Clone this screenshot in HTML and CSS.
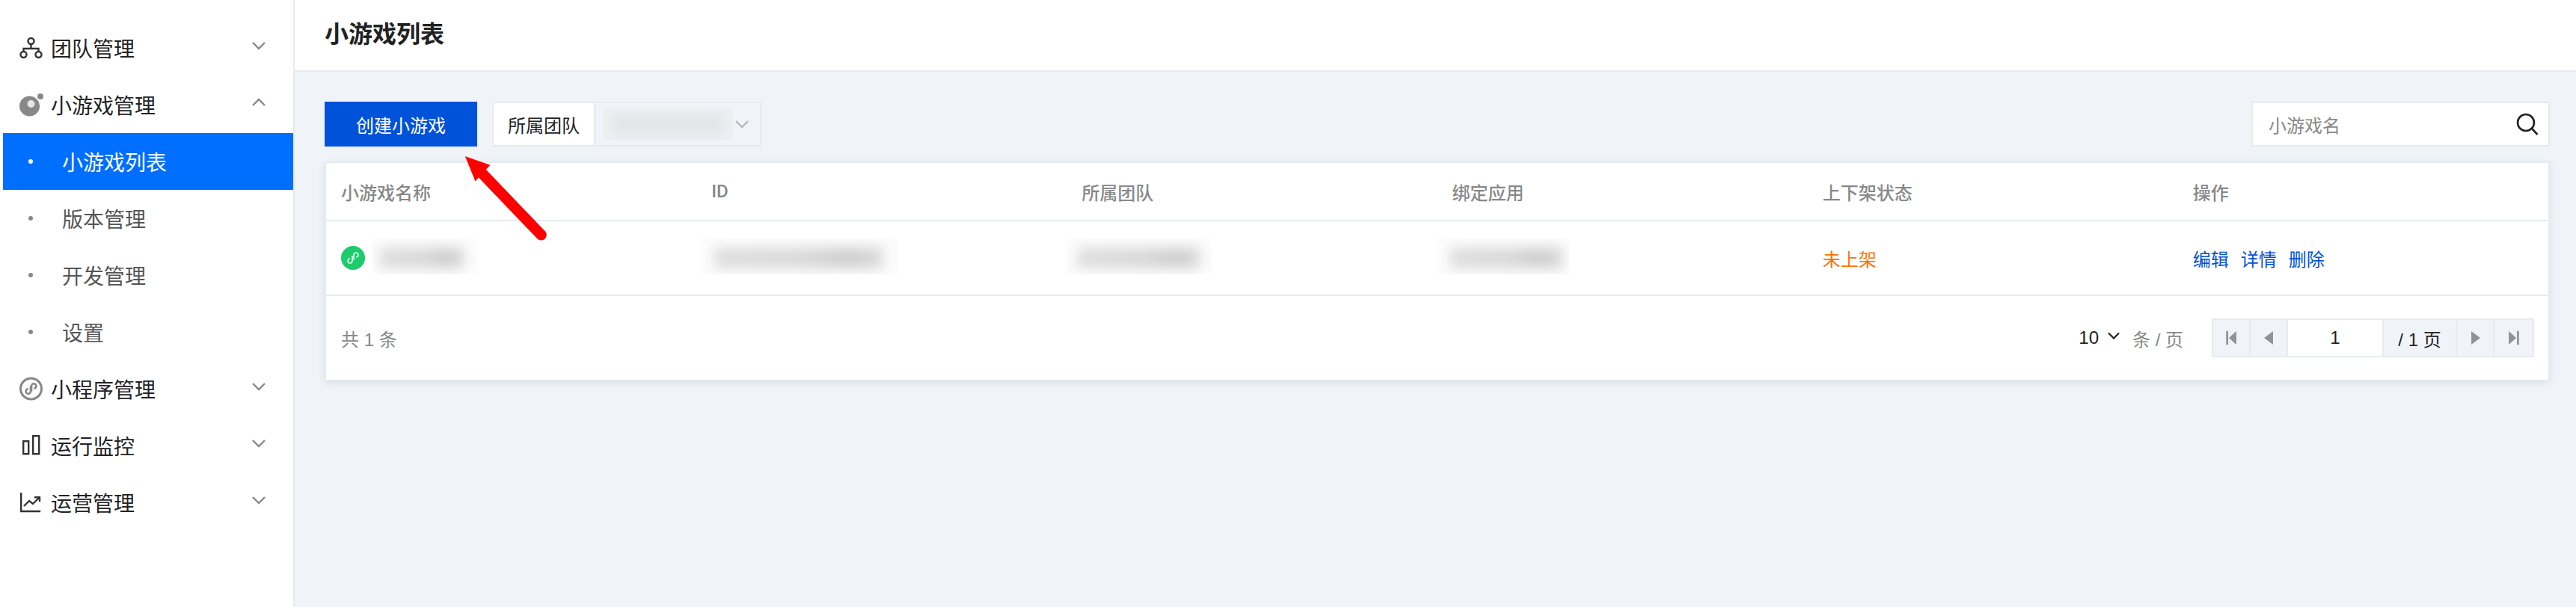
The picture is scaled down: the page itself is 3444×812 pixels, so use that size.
FILE: index.html
```html
<!DOCTYPE html>
<html lang="zh-CN">
<head>
  <meta charset="UTF-8">
  <title>小游戏列表</title>
  <link rel="stylesheet" href="styles.css">
</head>
<body>
  <div class="app">
    <aside class="sidebar">
      <div class="nav-item">
        <svg class="nav-icon" viewBox="0 0 32 32" fill="none" stroke="#333" stroke-width="2.4">
          <circle cx="15.5" cy="7" r="4"/><circle cx="5.5" cy="25" r="4"/><circle cx="25.5" cy="25" r="4"/>
          <path d="M15.5 11v6M5.5 21v-4h20v4"/>
        </svg>
        <span class="nav-text">团队管理</span>
        <svg class="chevron" viewBox="0 0 18 12" fill="none" stroke="#888" stroke-width="2.4"><path d="M1 2l8 8 8-8"/></svg>
      </div>
      <div class="nav-item">
        <svg class="nav-icon" viewBox="0 0 32 32">
          <circle cx="13.5" cy="18" r="13.5" fill="#888"/>
          <circle cx="15.5" cy="15" r="5" fill="#e4e4e4"/>
          <circle cx="28" cy="5" r="4" fill="#888"/>
        </svg>
        <span class="nav-text">小游戏管理</span>
        <svg class="chevron" viewBox="0 0 18 12" fill="none" stroke="#888" stroke-width="2.4"><path d="M1 10l8-8 8 8"/></svg>
      </div>
      <div class="sub-item active"><i class="dot"></i>小游戏列表</div>
      <div class="sub-item"><i class="dot"></i>版本管理</div>
      <div class="sub-item"><i class="dot"></i>开发管理</div>
      <div class="sub-item"><i class="dot"></i>设置</div>
      <div class="nav-item">
        <svg class="nav-icon" viewBox="0 0 32 32" fill="none" stroke="#888">
          <circle cx="15.5" cy="16" r="14" stroke-width="3"/>
          <path d="M15 12.5v7a3.2 3.2 0 1 1-3.2-3.2M16 19.5v-7a3.2 3.2 0 1 1 3.2 3.2" stroke-width="2.6"/>
        </svg>
        <span class="nav-text">小程序管理</span>
        <svg class="chevron" viewBox="0 0 18 12" fill="none" stroke="#888" stroke-width="2.4"><path d="M1 2l8 8 8-8"/></svg>
      </div>
      <div class="nav-item">
        <svg class="nav-icon" viewBox="0 0 32 32" fill="none" stroke="#333" stroke-width="2.4">
          <rect x="5.2" y="10.2" width="7" height="17"/><rect x="18.2" y="3.2" width="8" height="24"/>
        </svg>
        <span class="nav-text">运行监控</span>
        <svg class="chevron" viewBox="0 0 18 12" fill="none" stroke="#888" stroke-width="2.4"><path d="M1 2l8 8 8-8"/></svg>
      </div>
      <div class="nav-item">
        <svg class="nav-icon" viewBox="0 0 32 32" fill="none" stroke="#333" stroke-width="2.4">
          <path d="M2.2 3v25h26"/><path d="M6 21l7-7 5 4 8-8"/><path d="M20 9.2h7v6"/>
        </svg>
        <span class="nav-text">运营管理</span>
        <svg class="chevron" viewBox="0 0 18 12" fill="none" stroke="#888" stroke-width="2.4"><path d="M1 2l8 8 8-8"/></svg>
      </div>
    </aside>

    <div class="main">
      <header class="page-head">小游戏列表</header>
      <div class="content">
        <div class="toolbar">
          <button class="btn-primary">创建小游戏</button>
          <div class="team-filter">
            <span class="team-label">所属团队</span>
            <div class="team-select">
              <div class="mask mask-select"><span class="smear"></span></div>
              <svg class="select-arrow" viewBox="0 0 18 12" fill="none" stroke="#b4b8bd" stroke-width="2.4"><path d="M1 2l8 8 8-8"/></svg>
            </div>
          </div>
          <div class="search">
            <span class="placeholder">小游戏名</span>
            <svg class="search-icon" viewBox="0 0 30 30" fill="none" stroke="#222" stroke-width="2.6">
              <circle cx="13" cy="13" r="11"/><path d="M21 21l7.5 8"/>
            </svg>
          </div>
        </div>

        <div class="card">
          <div class="row row-head">
            <div>小游戏名称</div>
            <div>ID</div>
            <div>所属团队</div>
            <div>绑定应用</div>
            <div>上下架状态</div>
            <div>操作</div>
          </div>
          <div class="row row-body">
            <div class="cell-name">
              <svg class="game-badge" viewBox="0 0 32 32" fill="none">
                <circle cx="16" cy="16" r="16" fill="#1ccb6b"/>
                <path d="M15 13v7a3 3 0 1 1-3-3M17 19v-7a3 3 0 1 1 3 3" stroke="#e8fff2" stroke-width="1.6"/>
              </svg>
              <div class="mask mask-name"><span class="smear"></span></div>
            </div>
            <div class="cell-mask"><div class="mask mask-id"><span class="smear"></span></div></div>
            <div class="cell-mask"><div class="mask mask-team"><span class="smear"></span></div></div>
            <div class="cell-mask"><div class="mask mask-app"><span class="smear"></span></div></div>
            <div class="status">未上架</div>
            <div class="actions"><a>编辑</a><a>详情</a><a>删除</a></div>
          </div>
          <div class="card-foot">
            <span class="total">共 1 条</span>
            <div class="page-size">
              <span class="size-num">10</span>
              <svg class="size-arrow" viewBox="0 0 16 10" fill="none" stroke="#222" stroke-width="2.2"><path d="M1 1.5l7 7 7-7"/></svg>
              <span class="size-unit">条 / 页</span>
            </div>
            <div class="pager">
              <span class="pg-btn"><svg viewBox="0 0 16 22" fill="#8d9399"><rect x="0" y="1" width="3" height="20"/><path d="M15 1v20L4 11z"/></svg></span>
              <span class="pg-btn"><svg viewBox="0 0 16 22" fill="#8d9399"><path d="M14 1v20L1 11z"/></svg></span>
              <span class="pg-input">1</span>
              <span class="pg-total">/ 1 页</span>
              <span class="pg-btn"><svg viewBox="0 0 16 22" fill="#8d9399"><path d="M2 1v20l13-10z"/></svg></span>
              <span class="pg-btn pg-last"><svg viewBox="0 0 16 22" fill="#8d9399"><path d="M1 1v20l11-10z"/><rect x="13" y="1" width="3" height="20"/></svg></span>
            </div>
          </div>
        </div>
      </div>
    </div>
  </div>

  <!-- 标注箭头 -->
  <svg class="callout" viewBox="0 0 130 130">
    <path d="M2 0l37 13-22 24z" fill="#f00"/>
    <path d="M24 22l90 94" stroke="#f00" stroke-width="16" stroke-linecap="round" fill="none"/>
  </svg>
</body>
</html>
```

FILE: styles.css
```css
* {
  box-sizing: border-box;
}

html, body {
  margin: 0;
  height: 100%;
}

body {
  font-family: "Liberation Sans", "Noto Sans CJK SC", sans-serif;
  font-size: 24px;
  color: #222;
  background-color: #fff;
  overflow: hidden;
}

.app {
  display: flex;
  height: 812px;
}

/* 侧边栏 */
.sidebar {
  width: 394px;
  flex: none;
  padding: 26px 0 0 4px;
  background-color: #fff;
  border-right: 2px solid #e7ebf0;
}

.nav-item {
  display: flex;
  align-items: center;
  height: 76px;
  padding-left: 22px;
}

.nav-icon {
  width: 32px;
  height: 32px;
  flex: none;
}

.nav-text {
  margin-left: 10px;
  font-size: 28px;
  color: #222;
}

.chevron {
  width: 18px;
  height: 12px;
  margin-left: auto;
  margin-right: 37px;
  margin-top: -6px;
}

.sub-item {
  display: flex;
  align-items: center;
  height: 76px;
  font-size: 28px;
  color: #555;
}

.sub-item.active {
  background-color: #006eff;
  color: #fff;
}

.dot {
  width: 6px;
  height: 6px;
  margin-left: 34px;
  margin-right: 39px;
  border-radius: 50%;
  background-color: #888;
}

.active .dot {
  background-color: #fff;
}

/* 主区域 */
.main {
  flex: 1;
  min-width: 0;
  background-color: #f0f3f8;
}

.page-head {
  height: 96px;
  padding: 0 40px 8px 40px;
  display: flex;
  align-items: center;
  font-size: 32px;
  font-weight: 700;
  background-color: #fff;
  border-bottom: 2px solid #e7ebf0;
}

.content {
  padding: 40px 35px 0 40px;
}

.toolbar {
  display: flex;
  height: 60px;
  margin-bottom: 20px;
}

.btn-primary {
  width: 204px;
  padding: 0;
  border: none;
  font-family: inherit;
  font-size: 24px;
  color: #fff;
  background-color: #0052d9;
}

.team-filter {
  display: flex;
  width: 360px;
  margin-left: 20px;
  border: 2px solid #e7ebf0;
}

.team-label {
  width: 136px;
  display: flex;
  align-items: center;
  justify-content: center;
  background-color: #fff;
  border-right: 2px solid #e7ebf0;
}

.team-select {
  flex: 1;
  display: flex;
  align-items: center;
  padding-left: 10px;
}

.select-arrow {
  width: 18px;
  height: 12px;
  margin-left: 3px;
}

.search {
  width: 399px;
  margin-left: auto;
  display: flex;
  align-items: center;
  justify-content: space-between;
  padding: 0 13px 0 21px;
  background-color: #fff;
  border: 2px solid #e7ebf0;
}

.placeholder {
  color: #888;
}

.search-icon {
  width: 30px;
  height: 30px;
}

/* 打码区域 */
.mask {
  position: relative;
  overflow: hidden;
  height: 48px;
  margin-top: -4px;
  flex: none;
  background-color: #fcfcfc;
}

.smear {
  position: absolute;
  left: 19px;
  right: 20px;
  top: 12px;
  bottom: 8px;
  background: linear-gradient(90deg, #dedede, #dadada 50%, #cfcfcf 80%, #dadada);
  filter: blur(8px);
}

.mask-select {
  width: 174px;
  height: 42px;
  margin-top: 0;
  background-color: #edf0f3;
}

.mask-select .smear {
  left: 12px;
  right: 12px;
  top: 10px;
  bottom: 8px;
  background: #e2e4e7;
}

.mask-name {
  width: 142px;
  margin-left: 10px;
}

.mask-name .smear {
  left: 10px;
  right: 20px;
}

.mask-id {
  width: 264px;
  margin-left: -15px;
}

.mask-team {
  width: 195px;
  margin-left: -21px;
}

.mask-team .smear {
  left: 16px;
  right: 16px;
}

.mask-app {
  width: 178px;
  margin-left: -21px;
}

.mask-app .smear {
  right: 9px;
}

/* 表格卡片 */
.card {
  background-color: #fff;
  border: 2px solid #e7ebf0;
  border-bottom: none;
  box-shadow: 0 4px 10px rgba(54, 58, 80, 0.1);
}

.row {
  display: grid;
  grid-template-columns: repeat(6, 1fr);
  align-items: center;
  border-bottom: 2px solid #e7ebf0;
}

.row > div {
  padding-left: 20px;
}

.row-head {
  height: 78px;
  font-family: Roboto, "Noto Sans CJK SC", sans-serif;
  font-weight: 500;
  color: #888;
}

.row-body {
  height: 100px;
}

.cell-name, .cell-mask {
  display: flex;
  align-items: center;
}

.game-badge {
  width: 32px;
  height: 32px;
  flex: none;
}

.status {
  color: #ff7200;
}

.actions {
  display: flex;
  gap: 16px;
  color: #0052d9;
}

.card-foot {
  display: flex;
  align-items: center;
  height: 112px;
  padding: 0 19px 0 20px;
}

.total {
  color: #888;
}

.page-size {
  display: flex;
  align-items: center;
  margin-left: auto;
  margin-right: 38px;
}

.size-num {
  color: #222;
}

.size-arrow {
  width: 16px;
  height: 10px;
  margin: -6px 17px 0 12px;
}

.size-unit {
  color: #888;
}

.pager {
  display: flex;
  height: 52px;
  border: 2px solid #e7ebf0;
  background-color: #f0f3f8;
}

.pg-btn {
  width: 50px;
  display: flex;
  align-items: center;
  justify-content: center;
  border-right: 2px solid #e7ebf0;
}

.pg-btn svg {
  width: 15px;
  height: 20px;
}

.pg-last {
  border-right: none;
  width: 51px;
}

.pg-input {
  width: 128px;
  display: flex;
  align-items: center;
  justify-content: center;
  background-color: #fff;
  border-right: 2px solid #e7ebf0;
}

.pg-total {
  width: 98px;
  display: flex;
  align-items: center;
  justify-content: center;
  border-right: 2px solid #e7ebf0;
}

/* 红色箭头 */
.callout {
  position: absolute;
  left: 620px;
  top: 209px;
  width: 118px;
  height: 118px;
}
```
